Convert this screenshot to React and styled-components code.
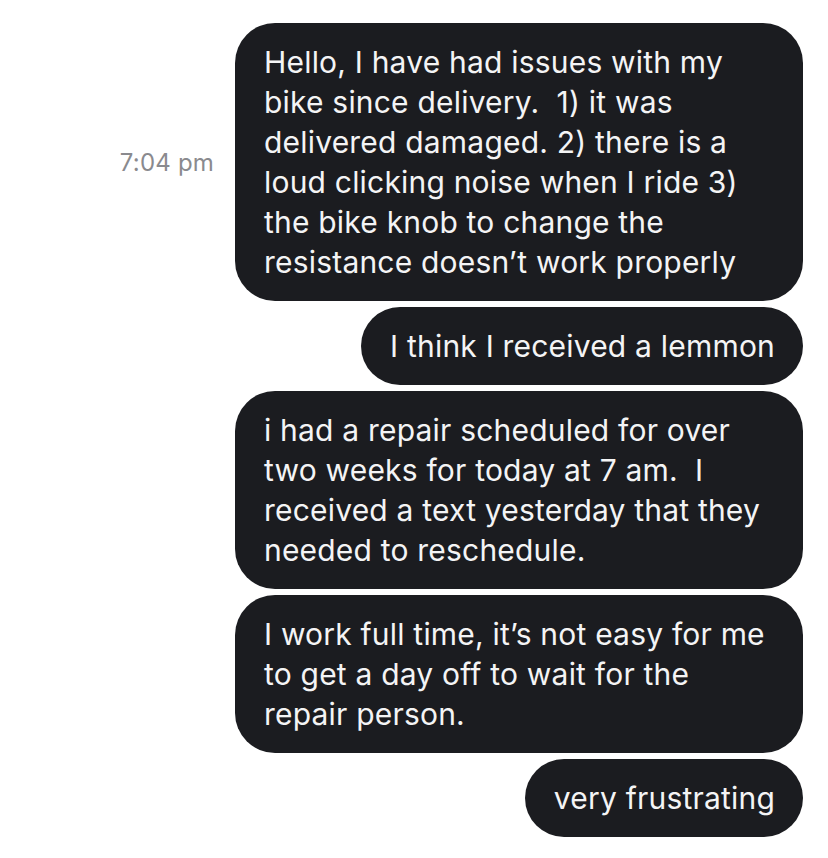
import React from 'react';
import styled, { createGlobalStyle } from 'styled-components';

const GlobalStyle = createGlobalStyle`
  html, body {
    margin: 0;
    padding: 0;
    background: #ffffff;
  }
  body {
    font-family: Inter, "Noto Sans", "Liberation Sans", sans-serif;
    -webkit-font-smoothing: antialiased;
  }
`;

const Thread = styled.div`
  display: flex;
  flex-direction: column;
  align-items: flex-end;
  gap: 6px;
  padding: 23px 25px 20px 0;
  width: 828px;
  box-sizing: border-box;
`;

const Row = styled.div`
  display: flex;
  align-items: center;
  gap: 21px;
`;

const Time = styled.span`
  font-size: 24px;
  color: #8a8a8e;
  letter-spacing: 0.2px;
`;

const Bubble = styled.div`
  box-sizing: border-box;
  width: ${(p) => (p.$wide ? '568px' : 'auto')};
  padding: 19px 28px 19px 29px;
  background: #1b1c20;
  color: #f4f4f5;
  border-radius: 40px;
  font-size: 30px;
  line-height: 40px;
  letter-spacing: 0.2px;
  white-space: nowrap;
`;

const Line = styled.div``;

const messages = [
  {
    time: '7:04 pm',
    wide: true,
    lines: [
      'Hello, I have had issues with my',
      'bike since delivery.  1) it was',
      'delivered damaged. 2) there is a',
      'loud clicking noise when I ride 3)',
      'the bike knob to change the',
      'resistance doesn\u2019t work properly',
    ],
  },
  { lines: ['I think I received a lemmon'] },
  {
    wide: true,
    lines: [
      'i had a repair scheduled for over',
      'two weeks for today at 7 am.  I',
      'received a text yesterday that they',
      'needed to reschedule.',
    ],
  },
  {
    wide: true,
    lines: [
      'I work full time, it\u2019s not easy for me',
      'to get a day off to wait for the',
      'repair person.',
    ],
  },
  { lines: ['very frustrating'] },
];

const Message = ({ msg }) => {
  const bubble = (
    <Bubble $wide={msg.wide}>
      {msg.lines.map((l, i) => (
        <Line key={i}>{l.replace(/  /g, ' \u00a0')}</Line>
      ))}
    </Bubble>
  );
  if (!msg.time) return bubble;
  return (
    <Row>
      <Time>{msg.time}</Time>
      {bubble}
    </Row>
  );
};

export default function App() {
  return (
    <>
      <GlobalStyle />
      <Thread>
        {messages.map((m, i) => (
          <Message key={i} msg={m} />
        ))}
      </Thread>
    </>
  );
}
